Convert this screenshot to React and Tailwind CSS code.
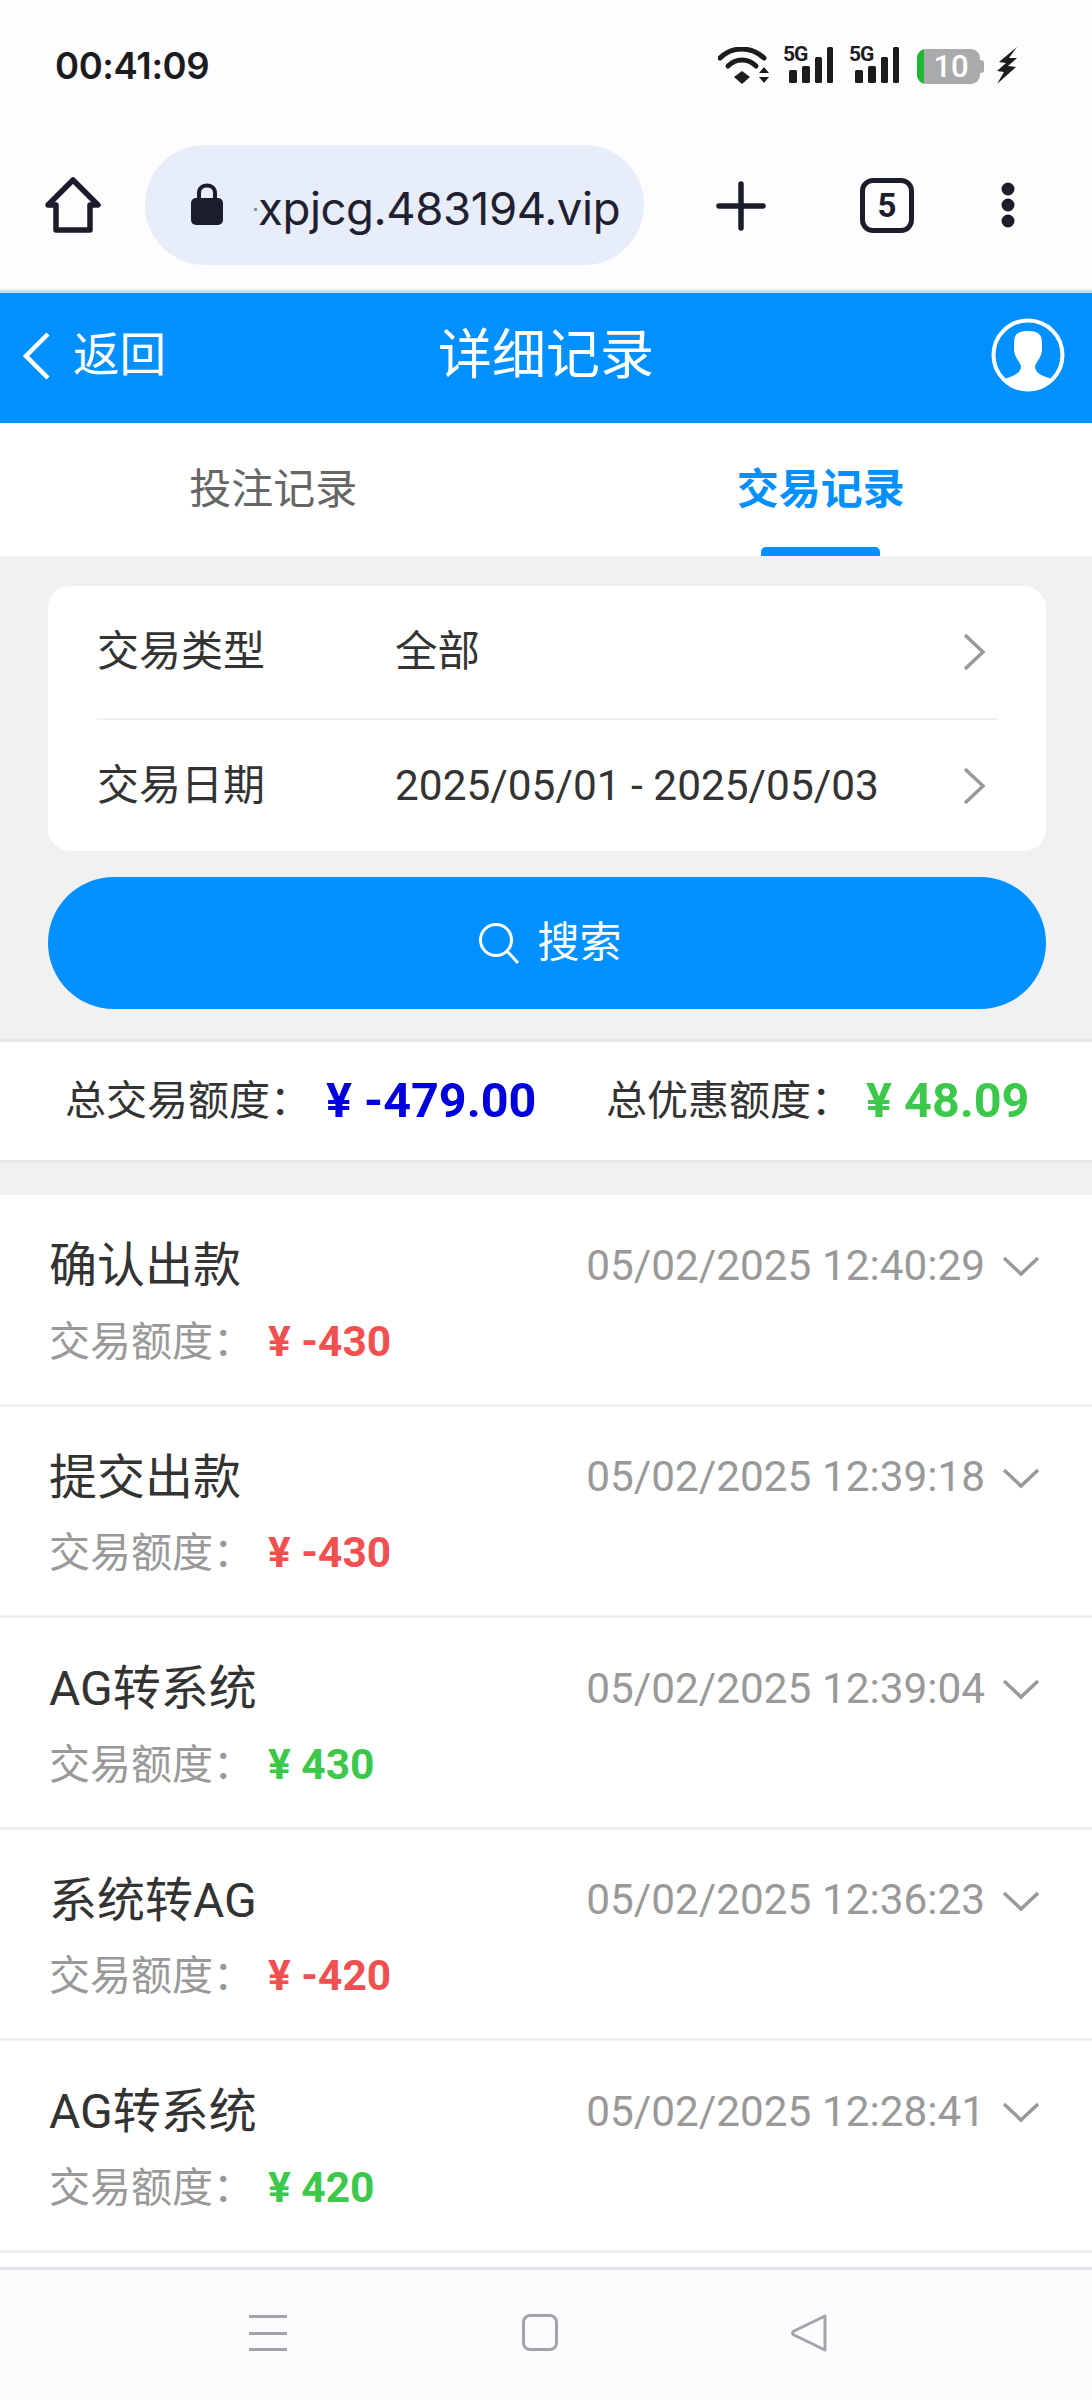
import React from "react";

const FONT = "font-['Roboto','Noto_Sans_CJK_SC',sans-serif]";

const rows = [
  { t: "确认出款", d: "05/02/2025 12:40:29", v: "¥ -430", c: "text-[#f05050]" },
  { t: "提交出款", d: "05/02/2025 12:39:18", v: "¥ -430", c: "text-[#f05050]" },
  { t: "AG转系统", d: "05/02/2025 12:39:04", v: "¥ 430", c: "text-[#3cc84a]" },
  { t: "系统转AG", d: "05/02/2025 12:36:23", v: "¥ -420", c: "text-[#f05050]" },
  { t: "AG转系统", d: "05/02/2025 12:28:41", v: "¥ 420", c: "text-[#3cc84a]" },
];

function Signal() {
  return (
    <div className="relative w-[50px] h-[38px]">
      <span className="absolute left-0 top-[-3px] text-[21px] leading-[20px] font-bold tracking-[-1px] text-[#1c1c1e] font-['Roboto',sans-serif]">5G</span>
      <svg width="50" height="38" viewBox="0 0 50 38" className="absolute left-0 top-0">
        <rect x="6" y="23" width="8" height="13" rx="1.5" fill="#1c1c1e" />
        <rect x="19" y="19" width="8" height="17" rx="1.5" fill="#1c1c1e" />
        <rect x="32" y="10" width="7" height="26" rx="1.5" fill="#1c1c1e" />
        <rect x="44" y="0" width="6" height="36" rx="1.5" fill="#1c1c1e" />
      </svg>
    </div>
  );
}

function Chevron({ className }) {
  return (
    <svg width="24" height="38" viewBox="0 0 24 38" fill="none" className={className}>
      <path d="M3 2 L21 19 L3 36" stroke="#999" strokeWidth="3.5" />
    </svg>
  );
}

function FilterRow({ label, value }) {
  return (
    <div className="flex items-center h-[132px]">
      <div className="w-[298px] text-[42px] text-[#333] leading-none">{label}</div>
      <div className="flex-1 text-[42.4px] text-[#333] leading-none">{value}</div>
      <Chevron className="mr-[12px]" />
    </div>
  );
}

function Row({ t, d, v, c }) {
  return (
    <div className="h-[211.5px] border-b-[3px] border-[#f1f1f1] pl-[49px] pr-[52px] pt-[41px] flex flex-col">
      <div className="flex items-center h-[60px]">
        <div className="flex-1 text-[48px] text-[#333] leading-none">{t}</div>
        <div className="text-[42.3px] text-[#999] leading-none">{d}</div>
        <svg width="38" height="22" viewBox="0 0 38 22" fill="none" className="ml-[17px]">
          <path d="M2 3 L19 19 L36 3" stroke="#999" strokeWidth="3.5" />
        </svg>
      </div>
      <div className="flex items-center h-[60px] mt-[16px]">
        <span className="w-[219px] text-[41px] text-[#999] leading-none">交易额度：</span>
        <span className={`text-[42.5px] font-bold leading-none ${c}`}>{v}</span>
      </div>
    </div>
  );
}

export default function App() {
  return (
    <div className={`w-[1092px] h-[2400px] flex flex-col overflow-hidden bg-white ${FONT}`}>
      {/* status + browser chrome */}
      <div className="h-[293px] bg-[#fdfcff] border-b-[3px] border-[#c9dff7] shrink-0 flex flex-col">
        <div className="h-[130px] pl-[55px] pr-[74px] pt-[46px] flex justify-between items-start">
          <span className="text-[36.5px] leading-[40px] font-semibold text-[#1c1c1e] font-['Inter',sans-serif] tracking-[-0.4px]">00:41:09</span>
          <div className="flex items-center h-[38px] mt-[1px]">
            <svg width="52" height="38" viewBox="0 0 52 38" fill="none">
              <path d="M2 11 C14 -1 33 -1 46 11" stroke="#1c1c1e" strokeWidth="5" strokeLinecap="round" />
              <path d="M10 19 C18 11 30 11 38 19" stroke="#1c1c1e" strokeWidth="5" strokeLinecap="round" />
              <path d="M16 30 L24 24 L32 30 L24 37 Z" fill="#1c1c1e" />
              <path d="M41 26 L46 20 L51 26 Z M41 30 L51 30 L46 36 Z" fill="#1c1c1e" />
            </svg>
            <div className="ml-[13px]"><Signal /></div>
            <div className="ml-[16px]"><Signal /></div>
            <div className="ml-[18px] relative w-[67px] h-[35px]">
              <div className="absolute inset-y-0 left-0 w-[63px] rounded-[9px] bg-[#aaaaac] overflow-hidden flex items-center justify-center">
                <div className="absolute inset-y-0 left-0 w-[7px] bg-[#1cb82e]" />
                <span className="text-[31px] leading-none text-white font-medium pl-[5px]">10</span>
              </div>
              <div className="absolute right-0 top-[11px] w-[4px] h-[13px] rounded-r-[3px] bg-[#aaaaac]" />
            </div>
            <svg width="22" height="38" viewBox="0 0 22 38" className="ml-[12px]">
              <path d="M21 0 L3 15 L10 16 L1 24 L8 25 L1 37 L20 20 L12 19 L21 11 L13 11 Z" fill="#1c1c1e" />
            </svg>
          </div>
        </div>
        <div className="flex items-start h-[160px] pt-[15px] relative">
          <svg width="56" height="56" viewBox="0 0 56 56" fill="none" className="ml-[45px] mt-[32px]">
            <path d="M28 3 L53 28 H45 V53 H11 V28 H3 Z" stroke="#1b1d2a" strokeWidth="5.5" strokeLinejoin="round" />
          </svg>
          <div className="ml-[44px] w-[499px] h-[120px] rounded-[60px] bg-[#e8edfa] flex items-center overflow-hidden">
            <svg width="34" height="44" viewBox="0 0 34 44" className="ml-[45px] mb-[2px] shrink-0">
              <path d="M9 18 V11 C9 1 25 1 25 11 V18" stroke="#1b1d2a" strokeWidth="4" fill="none" />
              <rect x="1" y="16" width="32" height="27" rx="5" fill="#1b1d2a" />
            </svg>
            <div className="ml-[30px] w-[3px] h-[3px] mt-[9px] bg-[#8b8d99] shrink-0" />
            <span className="ml-[1px] text-[45.5px] text-[#1f2130] leading-none font-['Inter',sans-serif] tracking-[-0.4px] mt-[7px] whitespace-nowrap">xpjcg.483194.vip</span>
          </div>
          <svg width="50" height="50" viewBox="0 0 50 50" className="ml-[72px] mt-[36px]">
            <path d="M25 3 V47 M3 25 H47" stroke="#1b1d2a" strokeWidth="5.5" strokeLinecap="round" />
          </svg>
          <div className="ml-[94px] mt-[33px] w-[54px] h-[55px] rounded-[13px] border-[5px] border-[#1b1d2a] flex items-center justify-center text-[33px] font-bold text-[#1b1d2a] leading-none">5</div>
          <svg width="16" height="46" viewBox="0 0 16 46" className="ml-[86px] mt-[37px]">
            <circle cx="8" cy="7" r="6.5" fill="#1b1d2a" />
            <circle cx="8" cy="23" r="6.5" fill="#1b1d2a" />
            <circle cx="8" cy="39" r="6.5" fill="#1b1d2a" />
          </svg>
        </div>
      </div>

      {/* header */}
      <div className="h-[130px] bg-[#0090ff] shrink-0 relative flex items-center justify-center">
        <div className="absolute left-[23px] top-[0] h-[125px] flex items-center">
          <svg width="28" height="48" viewBox="0 0 28 48" fill="none">
            <path d="M25 2 L3 24 L25 46" stroke="#fff" strokeWidth="4.5" />
          </svg>
          <span className="ml-[22px] text-[46.5px] leading-none text-white">返回</span>
        </div>
        <span className="text-[54px] leading-none text-white mb-[4px]">详细记录</span>
        <svg width="74" height="74" viewBox="0 0 74 74" className="absolute left-[991px] top-[25px]">
          <circle cx="37" cy="37" r="34.5" stroke="#fff" strokeWidth="4" fill="none" />
          <path d="M37 13 C27 13 23 16 23 25 V32 C23 38 28 43 30 48 C30 54 26 57 13 61 C20 68 28 72 37 72 C46 72 54 68 61 61 C48 57 44 54 44 48 C46 43 51 38 51 32 V25 C51 16 47 13 37 13 Z" fill="#fff" />
        </svg>
      </div>

      {/* tabs */}
      <div className="h-[133px] bg-white shrink-0 flex">
        <div className="flex-1 flex items-center justify-center text-[42px] leading-none text-[#666] pl-[2px]">投注记录</div>
        <div className="flex-1 relative flex items-center justify-center text-[42px] leading-none font-bold text-[#0090ff] pl-[5px]">
          交易记录
          <div className="absolute left-[216px] bottom-0 w-[119px] h-[9px] rounded-t-[5px] bg-[#0090ff]" />
        </div>
      </div>

      {/* filter section */}
      <div className="h-[486px] bg-[#f1f1f1] shrink-0 pl-[48px] pr-[46px] pt-[30px] border-b-[3px] border-[#e8e8e8]">
        <div className="h-[265px] bg-white rounded-[22px] pl-[49px] pr-[48px]">
          <FilterRow label="交易类型" value="全部" />
          <div className="h-[2px] bg-[#f1f1f1]" />
          <FilterRow label="交易日期" value="2025/05/01 - 2025/05/03" />
        </div>
        <div className="mt-[26px] h-[132px] rounded-[66px] bg-[#0090ff] flex items-center justify-center gap-[17px] pl-[6px]">
          <svg width="42" height="42" viewBox="0 0 42 42" fill="none">
            <circle cx="18" cy="18" r="15.5" stroke="#fff" strokeWidth="3" />
            <path d="M29 29 L40 41" stroke="#fff" strokeWidth="3" />
          </svg>
          <span className="text-[42px] leading-none text-white">搜索</span>
        </div>
      </div>

      {/* summary */}
      <div className="h-[118px] bg-white shrink-0 flex items-center pl-[65px]">
        <span className="w-[261px] text-[41px] leading-none text-[#333] whitespace-nowrap">总交易额度：</span>
        <span className="w-[280px] text-[48.5px] leading-none font-bold text-[#0000dd] whitespace-nowrap">¥ -479.00</span>
        <span className="w-[260px] text-[41px] leading-none text-[#333] whitespace-nowrap">总优惠额度：</span>
        <span className="text-[48.5px] leading-none font-bold text-[#3cc84a] whitespace-nowrap">¥ 48.09</span>
      </div>
      <div className="h-[35px] bg-[#f1f1f1] shrink-0 border-t-[3px] border-[#e8e8e8]" />

      {/* list */}
      <div className="h-[1072px] shrink-0 bg-white overflow-hidden">
        {rows.map((r, i) => (
          <Row key={i} {...r} />
        ))}
      </div>

      {/* nav bar */}
      <div className="flex-1 bg-[#fcfbfe] border-t-[3px] border-[#e3e4ef] flex items-start pt-[44px] relative">
        <div className="ml-[249px] w-[38px] h-[36px] flex flex-col justify-between mt-[1px]">
          <div className="h-[3px] bg-[#a3a3a8]" />
          <div className="h-[3px] bg-[#a3a3a8]" />
          <div className="h-[3px] bg-[#a3a3a8]" />
        </div>
        <div className="ml-[235px] w-[36px] h-[37px] rounded-[8px] border-[3px] border-[#a3a3a8]" />
        <svg width="36" height="38" viewBox="0 0 36 38" fill="none" className="ml-[233px]">
          <path d="M34 2 V36 L3 21 Q0 19 3 17 Z" stroke="#a3a3a8" strokeWidth="3" strokeLinejoin="round" />
        </svg>
      </div>
    </div>
  );
}
